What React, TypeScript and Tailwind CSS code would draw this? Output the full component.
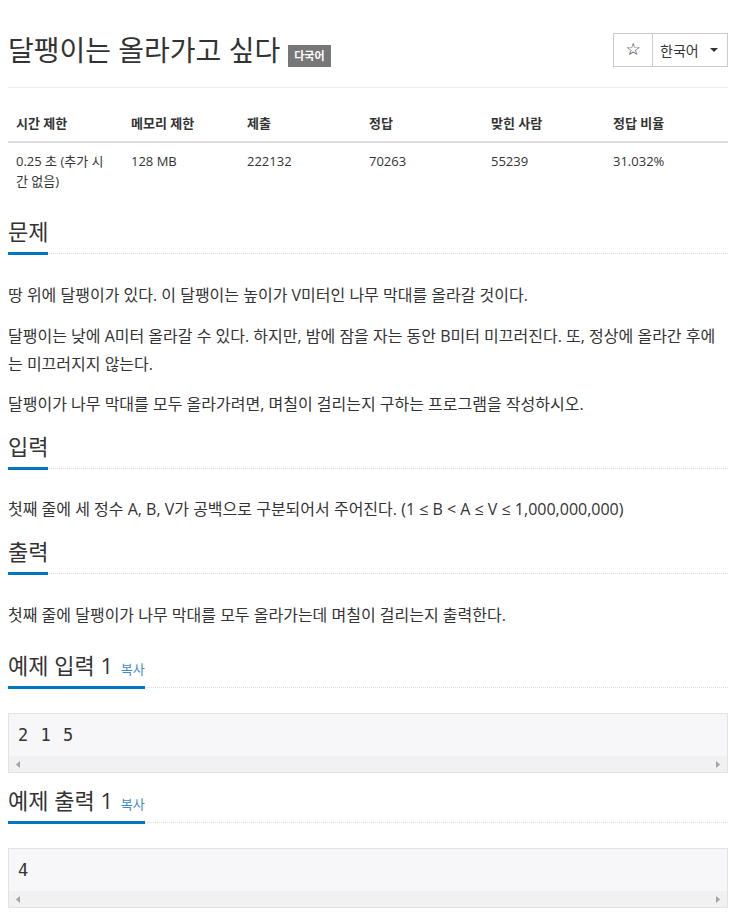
import React from "react";

const stats = [
    { label: "시간 제한", value: "0.25 초 (추가 시간 없음)", width: "w-[115px]" },
    { label: "메모리 제한", value: "128 MB", width: "w-[116px]" },
    { label: "제출", value: "222132", width: "w-[122px]" },
    { label: "정답", value: "70263", width: "w-[122px]" },
    { label: "맞힌 사람", value: "55239", width: "w-[122px]" },
    { label: "정답 비율", value: "31.032%", width: "w-[123px]" },
];

function Heading({ children, className = "" }: { children: React.ReactNode; className?: string }) {
    return (
        <div className={`flex border-b border-dotted border-[#ddd] ${className}`}>
            <span className="-mb-[2px] border-b-[3px] border-[#0076c0] pb-[6px] text-[22px] leading-[30px] text-[#333]">
                {children}
            </span>
        </div>
    );
}

function SampleBox({ text }: { text: string }) {
    return (
        <div className="mt-[25px] border border-[#e1e1e8] bg-[#f7f7f9]">
            <pre className="px-[9px] py-[10px] font-['DejaVu_Sans_Mono',monospace] text-[17px] leading-[22px] tracking-[1px] text-[#333]">
                {text}
            </pre>
            {/* fake horizontal scrollbar */}
            <div className="flex h-4 items-center justify-between bg-[#f1f1f1] px-[7px]">
                <svg width="4" height="7" viewBox="0 0 4 7">
                    <path d="M4 0 L0 3.5 L4 7 Z" fill="#a3a3a3" />
                </svg>
                <svg width="4" height="7" viewBox="0 0 4 7">
                    <path d="M0 0 L4 3.5 L0 7 Z" fill="#a3a3a3" />
                </svg>
            </div>
        </div>
    );
}

function SampleHeading({ title, className = "" }: { title: string; className?: string }) {
    return (
        <Heading className={className}>
            {title}{" "}
            <a className="ml-[2px] cursor-pointer text-[13px] leading-none text-[#428bca]">복사</a>
        </Heading>
    );
}

export default function App() {
    return (
        <div className="min-h-screen bg-white px-2 pb-4 font-['Open_Sans','Noto_Sans_CJK_KR',sans-serif] text-[#333]">
            <div className="w-[720px]">
                {/* Title row */}
                <div className="flex items-center justify-between border-b border-[#eee] pb-5 pt-[33px]">
                    <h1 className="flex items-center">
                        <span className="text-[28px] leading-[34px] text-[#333]">달팽이는 올라가고 싶다</span>
                        <span className="ml-[8px] mt-[12px] h-[22px] bg-[#777] px-[6px] text-[11px] font-bold leading-[22px] text-white">
                            다국어
                        </span>
                    </h1>
                    <div className="flex h-[34px]">
                        <button className="flex w-[40px] items-center justify-center border border-[#ccc] bg-white font-['DejaVu_Sans',sans-serif] text-[17px] text-[#222]">
                            ☆
                        </button>
                        <button className="flex w-[75px] items-center border border-l-0 border-[#ccc] bg-white pl-[7px] text-[14px]">
                            <span>한국어</span>
                            <span className="ml-[11px] h-0 w-0 border-x-4 border-t-4 border-x-transparent border-t-[#333]" />
                        </button>
                    </div>
                </div>

                {/* Stats table */}
                <table className="mt-[17px] w-full table-fixed border-collapse text-[13px] leading-5">
                    <colgroup>
                        {stats.map((s) => (
                            <col key={s.label} className={s.width} />
                        ))}
                    </colgroup>
                    <thead>
                        <tr>
                            {stats.map((s) => (
                                <th key={s.label} className="border-b-2 border-[#ddd] p-2 text-left font-bold">
                                    {s.label}
                                </th>
                            ))}
                        </tr>
                    </thead>
                    <tbody>
                        <tr>
                            {stats.map((s) => (
                                <td key={s.label} className="p-2 align-top">
                                    {s.value}
                                </td>
                            ))}
                        </tr>
                    </tbody>
                </table>

                {/* 문제 */}
                <Heading className="mt-[17px]">문제</Heading>
                <div className="mt-[27px] text-[16px] leading-[28px]">
                    <p className="mb-[13px]">땅 위에 달팽이가 있다. 이 달팽이는 높이가 V미터인 나무 막대를 올라갈 것이다.</p>
                    <p className="mb-3">
                        달팽이는 낮에 A미터 올라갈 수 있다. 하지만, 밤에 잠을 자는 동안 B미터 미끄러진다. 또, 정상에 올라간 후에는 미끄러지지 않는다.
                    </p>
                    <p>달팽이가 나무 막대를 모두 올라가려면, 며칠이 걸리는지 구하는 프로그램을 작성하시오.</p>
                </div>

                {/* 입력 */}
                <Heading className="mt-[13px]">입력</Heading>
                <p className="mt-[26px] text-[16px] leading-[28px]">
                    첫째 줄에 세 정수 A, B, V가 공백으로 구분되어서 주어진다. (1 ≤ B &lt; A ≤ V ≤ 1,000,000,000)
                </p>

                {/* 출력 */}
                <Heading className="mt-[13px]">출력</Heading>
                <p className="mt-[27px] text-[16px] leading-[28px]">
                    첫째 줄에 달팽이가 나무 막대를 모두 올라가는데 며칠이 걸리는지 출력한다.
                </p>

                {/* 예제 */}
                <SampleHeading title="예제 입력 1" className="mt-[21px]" />
                <SampleBox text="2 1 5" />

                <SampleHeading title="예제 출력 1" className="mt-[12px]" />
                <SampleBox text="4" />
            </div>
        </div>
    );
}
